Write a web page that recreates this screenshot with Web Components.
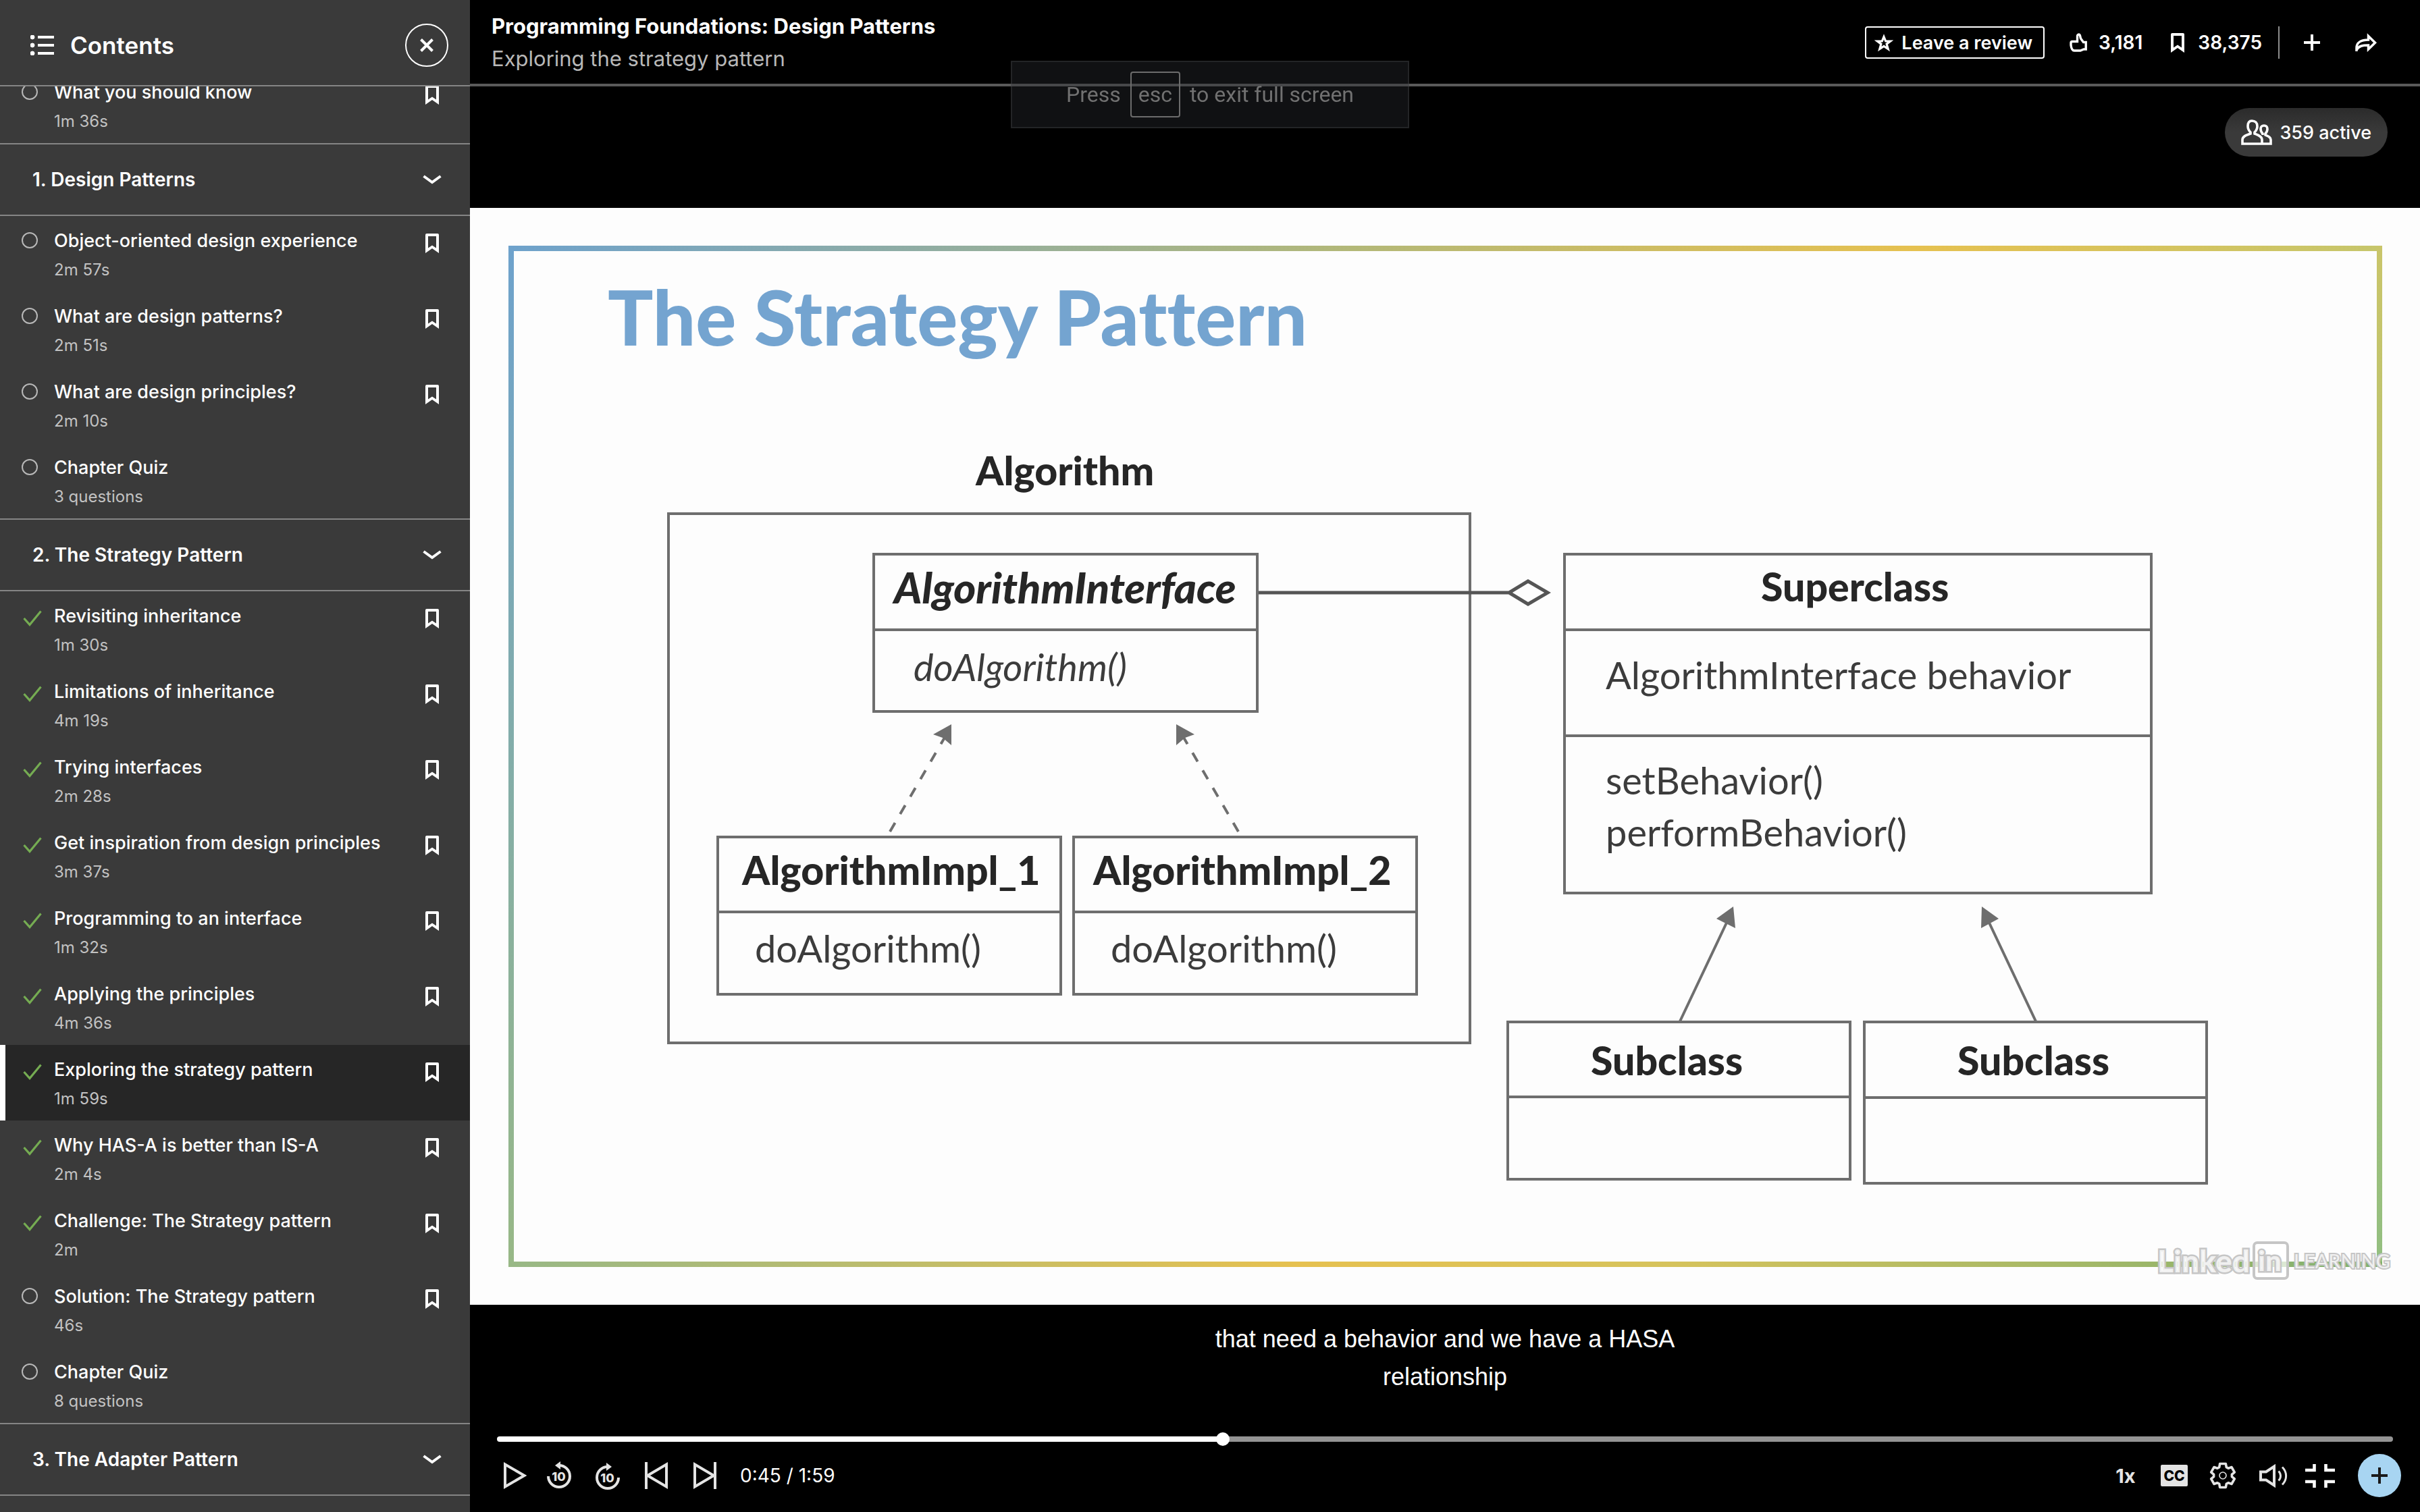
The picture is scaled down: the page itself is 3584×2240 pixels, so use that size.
<!DOCTYPE html>
<html lang="en">
<head>
<meta charset="utf-8">
<title>Programming Foundations: Design Patterns</title>
<style>
html, body { margin: 0; height: 100%; background: #000; }
body { font-family: Inter, "Liberation Sans", sans-serif; color: #fff; }
</style>
</head>
<body>
<course-player>
  <course-contents slot="contents" heading="Contents">
    <lesson-item href="#know" time="1m 36s">What you should know</lesson-item>
    <course-chapter>1. Design Patterns</course-chapter>
    <lesson-item href="#ood" time="2m 57s">Object-oriented design experience</lesson-item>
    <lesson-item href="#patterns" time="2m 51s">What are design patterns?</lesson-item>
    <lesson-item href="#principles" time="2m 10s">What are design principles?</lesson-item>
    <lesson-item href="#quiz1" time="3 questions" quiz>Chapter Quiz</lesson-item>
    <course-chapter>2. The Strategy Pattern</course-chapter>
    <lesson-item href="#l1" time="1m 30s" done>Revisiting inheritance</lesson-item>
    <lesson-item href="#l2" time="4m 19s" done>Limitations of inheritance</lesson-item>
    <lesson-item href="#l3" time="2m 28s" done>Trying interfaces</lesson-item>
    <lesson-item href="#l4" time="3m 37s" done>Get inspiration from design principles</lesson-item>
    <lesson-item href="#l5" time="1m 32s" done>Programming to an interface</lesson-item>
    <lesson-item href="#l6" time="4m 36s" done>Applying the principles</lesson-item>
    <lesson-item href="#l7" time="1m 59s" done active>Exploring the strategy pattern</lesson-item>
    <lesson-item href="#l8" time="2m 4s" done>Why HAS-A is better than IS-A</lesson-item>
    <lesson-item href="#l9" time="2m" done>Challenge: The Strategy pattern</lesson-item>
    <lesson-item href="#l10" time="46s">Solution: The Strategy pattern</lesson-item>
    <lesson-item href="#quiz2" time="8 questions" quiz>Chapter Quiz</lesson-item>
    <course-chapter>3. The Adapter Pattern</course-chapter>
  </course-contents>
  <course-header slot="header">
    <span slot="course">Programming Foundations: Design Patterns</span>
    <span slot="lesson">Exploring the strategy pattern</span>
  </course-header>
  <active-viewers slot="viewers">359 active</active-viewers>
  <strategy-slide slot="slide"></strategy-slide>
  <span slot="caption">that need a behavior and we have a HASA relationship</span>
  <player-controls slot="controls"></player-controls>
</course-player>
<escape-hint></escape-hint>

<script>
const gear = (() => {
  const pts = [];
  for (let k = 0; k < 6; k++) {
    for (const [d, r] of [[-23, 13.5], [-14, 18], [14, 18], [23, 13.5]]) {
      const a = (k * 60 - 90 + d) * Math.PI / 180;
      pts.push((20 + r * Math.cos(a)).toFixed(2) + ' ' + (20 + r * Math.sin(a)).toFixed(2));
    }
  }
  return 'M' + pts.join('L') + 'Z';
})();

const ICONS = {
  list: [35, 30, '<g fill="currentColor"><circle cx="3" cy="3" r="3"/><circle cx="3" cy="15" r="3"/><circle cx="3" cy="27" r="3"/><path d="M11 1h24v4H11zM11 13h24v4H11zM11 25h24v4H11z" stroke="none"/></g>'],
  close: [20, 20, '<path d="M1.500 1.500L18.500 18.500M18.500 1.500L1.500 18.500" stroke-width="4"/>'],
  bookmark: [20, 29, '<path fill="currentColor" stroke="none" fill-rule="evenodd" d="M2 0H18Q20 0 20 2V29L10 22L0 29V2Q0 0 2 0ZM4 4V21.500L10 17.500L16 21.500V4Z"/>'],
  ring: [24, 24, '<circle cx="12" cy="12" r="11" stroke-width="2"/>'],
  check: [28, 24, '<path d="M1.500 12L10 21.500L26.500 1.500" stroke-width="3.200"/>'],
  chevron: [28, 14, '<path d="M1.500 2L14 11L26.500 2" stroke-width="4"/>'],
  star: [28, 27, '<path d="M14 4.500L16.700 11H23.600L18.100 15.200L20.200 22.500L14 18.400L7.800 22.500L9.900 15.200L4.400 11H11.300Z" stroke-width="3.200"/>'],
  thumb: [26, 28, '<path d="M11.500 12.500V5C11.500 1.500 15 1 15.500 4L16.500 8L20.500 13.500H24.200V24H21L16 26H7C4 26 2.500 22 2 18V14.500C2 13 3 12.500 4 12.500Z" stroke-width="3.400"/>'],
  plus: [24, 24, '<path d="M12 0V24M0 12H24" stroke-width="4"/>'],
  share: [32, 28, '<path d="M2 27V22C2 14 9 10 19.500 10V4.500L29.500 14.200L19.500 24V18C11 18 5 19 2 25" stroke-width="3.500"/>'],
  people: [46, 38, '<path d="M16 2c-4 0-6 3-6 8 0 4 2 7 4 9v2c-6 2-12 4-12 9v6h29v-6c0-5-6-7-11-9v-2c2-2 4-5 4-9 0-5-3-8-8-8zM31 36h13v-6c0-4-4-5-8-7v-2c2-2 3-4 3-7s-2-5-5-5-5 2-5 5 1 5 3 7v2" stroke-width="3.600"/>'],
  play: [34, 40, '<path d="M2 3.500L30.500 20L2 36.500Z" stroke-width="4"/>'],
  back: [36, 42, '<path d="M2 22A16 16 0 1 0 18 6" stroke-width="4"/><path d="M20 0L12 6L20 12Z" fill="currentColor" stroke="none"/><text x="17.500" y="29" text-anchor="middle">10</text>'],
  forward: [36, 42, '<path d="M34 24A16 16 0 1 1 18 8" stroke-width="4"/><path d="M16 2L24 8L16 14Z" fill="currentColor" stroke="none"/><text x="17.500" y="31" text-anchor="middle">10</text>'],
  prev: [34, 40, '<path d="M2 0V40M32 3.500V36.500L4 20Z" stroke-width="4"/>'],
  next: [34, 40, '<path d="M32 0V40M2 3.500V36.500L30 20Z" stroke-width="4"/>'],
  cc: [40, 32, '<rect width="40" height="32" rx="2" fill="currentColor" stroke="none"/><text x="20" y="24" text-anchor="middle" style="fill:#000;font-size:21px">CC</text>'],
  gear: [40, 40, `<path d="${gear}" stroke-width="3.600" stroke-linejoin="round"/><circle cx="20" cy="20" r="5" stroke-width="1.600"/>`],
  volume: [42, 35, '<path d="M2 11.500H10L22 3.500V31.500L10 23.500H2Z" stroke-width="4"/><path d="M28.500 10.500c4 4 4 10 0 14M34 4.500c7.500 7.500 7.500 18.500 0 26" stroke-width="3"/>'],
  shrink: [44, 35, '<path d="M0 9H13.500V0M44 9H30.500V0M0 26H13.500V35M44 26H30.500V35" stroke-width="4.600"/>']
};

const define = (name, css, html, setup) => {
  const template = document.createElement('template');
  template.innerHTML = `<style>:host{display:block;box-sizing:border-box}*{box-sizing:border-box}
    button{font:inherit;color:inherit;background:none;border:0;padding:0;margin:0;display:flex;align-items:center;justify-content:center;cursor:pointer}
    a{color:inherit;text-decoration:none}${css}</style>${html}`;
  customElements.define(name, class extends HTMLElement {
    connectedCallback() {
      if (this.shadowRoot) return;
      const root = this.attachShadow({ mode: 'open' });
      root.append(template.content.cloneNode(true));
      if (setup) setup(this, root);
    }
  });
};

define('ui-icon', ':host{display:block;flex:none}svg{display:block}text{font:800 18px Inter,sans-serif;fill:currentColor;stroke:none}', '', (host, root) => {
  const [w, h, body] = ICONS[host.getAttribute('name')];
  root.innerHTML += `<svg width="${w}" height="${h}" viewBox="0 0 ${w} ${h}" fill="none" stroke="currentColor" aria-hidden="true">${body}</svg>`;
});

define('course-player', `
  :host{display:flex;min-height:100vh;background:#000}
  aside{width:696px;flex:none;height:100vh}
  main{flex:1;min-width:0;display:flex;flex-direction:column}
  .stage{position:relative;padding-top:180px}
  .viewers{position:absolute;top:32px;right:48px}
  .caption{font:36px/56px "Liberation Sans",Arial,sans-serif;text-align:center;width:720px;margin:23px auto 54px}
`, `<aside><slot name="contents"></slot></aside>
  <main><slot name="header"></slot>
    <div class="stage"><slot name="slide"></slot><div class="viewers"><slot name="viewers"></slot></div></div>
    <div class="caption"><slot name="caption"></slot></div>
    <slot name="controls"></slot>
  </main>`);

define('course-contents', `
  :host{display:flex;flex-direction:column;height:100%;background:#3a3a3a;overflow:hidden}
  header{display:flex;align-items:center;gap:24px;height:128px;flex:none;padding:8px 32px 0 45px;border-bottom:2px solid #858585}
  h2{flex:1;margin:0;font-size:35px;line-height:48px;font-weight:600}
  button{width:64px;height:64px;border:2px solid #fff;border-radius:50%}
  .scroll{flex:1;min-height:0;overflow:hidden}
  .list{margin-top:-28px}
`, `<header><ui-icon name="list"></ui-icon><h2></h2><button aria-label="Close contents"><ui-icon name="close"></ui-icon></button></header>
  <div class="scroll"><div class="list"><slot></slot></div></div>`,
  (host, root) => { root.querySelector('h2').textContent = host.getAttribute('heading'); });

define('course-chapter', `
  button{width:100%;height:108px;padding:0 42px 0 48px;justify-content:space-between;border-top:2px solid #858585;border-bottom:2px solid #858585;font-size:28px;font-weight:600}
`, '<button aria-expanded="true"><slot></slot><ui-icon name="chevron"></ui-icon></button>');

define('lesson-item', `
  :host{display:flex;align-items:flex-start;height:112px;padding:16px 46px 0 32px}
  :host([active]){background:#262626;box-shadow:inset 8px 0 #fff}
  .state{width:48px;flex:none;padding-top:8px;color:#b8b8b8}
  :host([done]) .state{padding:12px 0 0 2px;color:#75ac52}
  a{flex:1;min-width:0;font-size:27px;line-height:42px;font-weight:500}
  small{display:block;font-size:24px;line-height:44px;font-weight:400;color:#c2c2c2}
  button{padding-top:10px}
  :host([quiz]) button{display:none}
`, '<div class="state"></div><a><slot></slot><small></small></a><button aria-label="Save lesson"><ui-icon name="bookmark"></ui-icon></button>',
  (host, root) => {
    root.querySelector('.state').innerHTML = `<ui-icon name="${host.hasAttribute('done') ? 'check' : 'ring'}"></ui-icon>`;
    root.querySelector('a').href = host.getAttribute('href');
    root.querySelector('small').textContent = host.getAttribute('time');
  });

define('course-header', `
  :host{display:flex;align-items:center;justify-content:space-between;height:128px;padding:2px 64px 0 32px;border-bottom:4px solid #5a5a5a}
  h1,p{margin:0;font-size:31px;line-height:48px}
  h1{font-weight:700}
  p{color:#b8b8b8}
  nav{display:flex;align-items:center;font-size:28px;font-weight:600}
  .review{height:48px;border:2px solid #fff;border-radius:4px;padding:0 16px 0 12px;gap:12px;font-size:27px;margin-right:32px}
  .count{gap:16px;margin-right:34px}
  .count ui-icon,.icon{width:32px;display:flex;justify-content:center}
  .count ui-icon{padding-left:3px}
  .saved{margin-right:24px}
  i{width:2px;height:48px;background:#8c8c8c;margin-right:32px}
  .icon+.icon{margin-left:48px}
`, `<div><h1><slot name="course"></slot></h1><p><slot name="lesson"></slot></p></div>
  <nav aria-label="Course actions">
    <button class="review"><ui-icon name="star"></ui-icon>Leave a review</button>
    <button class="count" aria-label="Like"><ui-icon name="thumb"></ui-icon>3,181</button>
    <button class="count saved" aria-label="Save"><ui-icon name="bookmark"></ui-icon>38,375</button>
    <i></i>
    <button class="icon" aria-label="Add"><ui-icon name="plus"></ui-icon></button>
    <button class="icon" aria-label="Share"><ui-icon name="share"></ui-icon></button>
  </nav>`);

define('active-viewers', `
  button{height:72px;border-radius:36px;padding:0 24px;gap:11px;font-size:27px;font-weight:500;background:linear-gradient(#2b2b2b,#3a3a3a 50%)}
`, '<button><ui-icon name="people"></ui-icon><slot></slot></button>');

define('escape-hint', `
  :host{position:fixed;top:90px;left:0;right:0;width:fit-content;margin:0 auto;height:100px;display:flex;align-items:center;gap:14px;padding:0 80px;
    background:rgba(41,44,49,.39);border:2px solid rgba(80,82,84,.3);color:#717171;font:32px/40px Roboto,sans-serif}
  kbd{font:inherit;height:68px;padding:12px 10px;border:2px solid #6c6c6c;border-radius:4px}
`, '<span>Press</span><kbd>esc</kbd><span>to exit full screen</span>');

const box = (x, y, w, h, ...rules) =>
  `<rect class="line" x="${x}" y="${y}" width="${w}" height="${h}"/>` +
  rules.map(r => `<path class="line" d="M${x} ${r}H${x + w}"/>`).join('');
const label = (cls, x, y, s) => `<text class="${cls}" x="${x}" y="${y}">${s}</text>`;

define('strategy-slide', `
  :host{background:#fdfdfd}
  svg{display:block;width:100%;height:auto}
  text{font-family:Lato,"Open Sans",sans-serif;font-variant-ligatures:none}
  .title{font-size:112px;font-weight:900;fill:#74a4d0}
  .name{font-size:59px;font-weight:900;fill:#262626}
  .wide{font-size:63px}
  .body{font-size:56px;fill:#3c3c3c}
  .italic{font-style:italic}
  .line{fill:none;stroke:#6e6e6e;stroke-width:4}
  .assoc{stroke:#555;stroke-width:5}
  .head{fill:#6e6e6e}
  .mark{fill:#fff;fill-opacity:.75;stroke:#c6c6c6;stroke-width:5;paint-order:stroke;font-weight:900}
`, `<svg viewBox="0 0 2888 1625" role="img" aria-label="The Strategy Pattern class diagram">
  <defs>
    <linearGradient id="t"><stop offset="0" stop-color="#6ea2cc"/><stop offset=".45" stop-color="#b3b878"/><stop offset=".75" stop-color="#e6c150"/><stop offset="1" stop-color="#c6c66c"/></linearGradient>
    <linearGradient id="l" x2="0" y2="1"><stop offset="0" stop-color="#6ea2cc"/><stop offset="1" stop-color="#98b886"/></linearGradient>
    <linearGradient id="r" x2="0" y2="1"><stop offset="0" stop-color="#c9c56a"/><stop offset="1" stop-color="#94bf80"/></linearGradient>
    <linearGradient id="b"><stop offset="0" stop-color="#98b886"/><stop offset=".42" stop-color="#e6c150"/><stop offset=".62" stop-color="#d6c35c"/><stop offset="1" stop-color="#7fb070"/></linearGradient>
  </defs>
  <rect x="57" y="56" width="2775" height="8" fill="url(#t)"/>
  <rect x="57" y="56" width="8" height="1513" fill="url(#l)"/>
  <rect x="2824" y="56" width="8" height="1513" fill="url(#r)"/>
  <rect x="57" y="1561" width="2775" height="8" fill="url(#b)"/>
  ${label('title', 204, 204, 'The Strategy Pattern')}
  ${label('name', 749, 411, 'Algorithm')}
  ${box(294, 453, 1187, 784)}
  ${box(598, 513, 568, 233, 625)}
  ${label('name wide italic', 628, 586, 'AlgorithmInterface')}
  ${label('body italic', 657, 701, 'doAlgorithm()')}
  ${box(367, 932, 508, 233, 1043)}
  ${label('name', 403, 1003, 'AlgorithmImpl_1')}
  ${label('body', 422, 1118, 'doAlgorithm()')}
  ${box(894, 932, 508, 233, 1043)}
  ${label('name', 923, 1003, 'AlgorithmImpl_2')}
  ${label('body', 949, 1118, 'doAlgorithm()')}
  ${box(1621, 513, 869, 502, 625, 782)}
  ${label('name', 1912, 583, 'Superclass')}
  ${label('body', 1682, 713, 'AlgorithmInterface behavior')}
  ${label('body', 1682, 869, 'setBehavior()')}
  ${label('body', 1682, 946, 'performBehavior()')}
  ${box(1537, 1206, 507, 233, 1317)}
  ${label('name', 1660, 1285, 'Subclass')}
  ${box(2065, 1206, 507, 239, 1318)}
  ${label('name', 2203, 1285, 'Subclass')}
  <path class="line assoc" d="M1168 570H1539L1567 553L1596 570L1567 587L1539 570"/>
  <path class="line" stroke-dasharray="15 15" d="M622 924L704 783M1138 924L1056 783"/>
  <path class="line" d="M1792 1205L1862 1057M2319 1205L2249 1057"/>
  <path class="head" d="M713 765L686 780L700 785L713 796ZM1046 765L1073 780L1059 785L1046 796ZM1871 1035L1846 1053L1874 1067ZM2239 1035L2264 1053L2238 1067Z"/>
  <text class="mark" style="font-size:46px" x="2499" y="1577">Linked</text>
  <rect x="2642" y="1533" width="50" height="53" rx="5" fill="#fff" fill-opacity=".7" stroke="#c6c6c6" stroke-width="4"/>
  <text class="mark" style="font-size:42px" x="2648" y="1575">in</text>
  <text class="mark" style="font-size:29px;font-weight:400;stroke-width:4" x="2701" y="1571">LEARNING</text>
</svg>`);

define('player-controls', `
  .seek{padding:0 40px;height:20px;display:flex}
  input{appearance:none;-webkit-appearance:none;width:100%;height:20px;margin:0;background:none}
  input::-webkit-slider-runnable-track{height:8px;border-radius:4px;background:linear-gradient(90deg,#fff 38%,#949494 38%)}
  input::-webkit-slider-thumb{-webkit-appearance:none;width:20px;height:20px;margin-top:-6px;border-radius:50%;background:#fff}
  .bar{display:flex;align-items:center;gap:24px;height:64px;margin-top:12px;padding:0 28px 0 36px;color:#e4e4e4}
  .bar button{width:48px;height:48px}
  .bar .shift{justify-content:flex-end}
  time{flex:1;font-size:28px;color:#fff;margin-left:4px}
  .rate{font-size:29px;font-weight:700}
  .full{color:#fff}
  .bar .add{width:64px;height:64px;border-radius:50%;background:#a8d5f2;color:#1a1a1a;margin-left:8px}
`, `<div class="seek"><input type="range" min="0" max="1000" value="382" aria-label="Seek"></div>
  <div class="bar">
    <button class="shift" aria-label="Play"><ui-icon name="play"></ui-icon></button>
    <button aria-label="Back 10 seconds"><ui-icon name="back"></ui-icon></button>
    <button aria-label="Forward 10 seconds"><ui-icon name="forward"></ui-icon></button>
    <button aria-label="Previous"><ui-icon name="prev"></ui-icon></button>
    <button aria-label="Next"><ui-icon name="next"></ui-icon></button>
    <time>0:45 / 1:59</time>
    <button class="rate">1x</button>
    <button aria-label="Captions"><ui-icon name="cc"></ui-icon></button>
    <button aria-label="Settings"><ui-icon name="gear"></ui-icon></button>
    <button class="shift" aria-label="Volume"><ui-icon name="volume"></ui-icon></button>
    <button class="full" aria-label="Exit full screen"><ui-icon name="shrink"></ui-icon></button>
    <button class="add" aria-label="Add note"><ui-icon name="plus"></ui-icon></button>
  </div>`);
</script>
</body>
</html>
